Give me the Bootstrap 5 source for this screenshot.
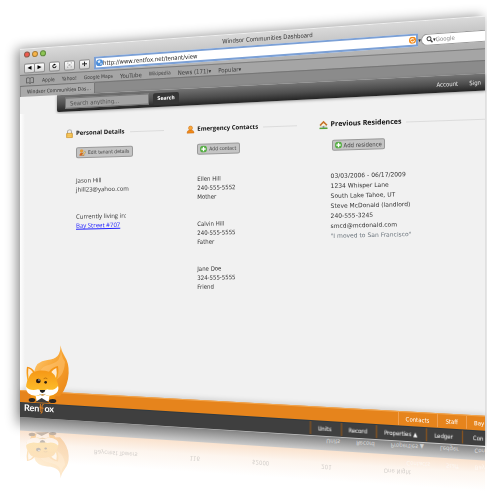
<!DOCTYPE html>
<html lang="en">
<head>
<meta charset="utf-8">
<meta name="viewport" content="width=device-width, initial-scale=1">
<title>Windsor Communities Dashboard</title>
<link href="https://cdn.jsdelivr.net/npm/bootstrap@5.3.0/dist/css/bootstrap.min.css" rel="stylesheet">
<style>
body{background:#fff;font-family:"DejaVu Sans Condensed","DejaVu Sans",sans-serif;font-size:6px;line-height:9px;color:#333;min-height:100vh}
.stage{padding:49px 2px 0 20px;min-height:100vh}
.win{filter:drop-shadow(-3px 0 6px rgba(0,0,0,.45))}
.tilt{transform-origin:0 0}
.chrome{transform:skewY(-4.1deg);background:linear-gradient(#d9d9d9,#b4b4b4 26px,#adadad);border-top:1px solid #efefef;height:38px;margin-bottom:-12px}
.titlebar{height:12px}
.titlebar h1{font-size:6px;line-height:11px;color:#333;padding-left:30px}
.lights{position:absolute;left:4px;top:2px;gap:2px}
.lights span{width:6px;height:6px;border-radius:50%;border:1px solid #8a5a4a;background:#ee5a4e}
.lights span:nth-child(2){background:#f7b448;border-color:#a87d3a}
.lights span:nth-child(3){background:#8ec556;border-color:#5f8a3c}
.tools{height:13px;padding-left:4px}
.tools button{width:11px;flex:none;height:10px;border:1px solid #8f8f8f;border-radius:2px;background:linear-gradient(#fff,#d4d4d4);color:#222}
.tools svg{width:5px;height:5px;display:block}
.tools label svg,.address svg{width:7px;height:7px}
.tools button.next{margin-left:-1px}
.address{height:13px;background:#fff;border:2px solid #7ba0d6;margin-left:4px}
.address input,.google input,.find input{border:0;background:none;font-size:6px;line-height:9px;color:#222;outline:0;min-width:0}
.google{height:12px;width:64px;background:#fff;border:1px solid #9a9a9a;border-right:0;border-radius:6px 0 0 6px}
.google input::placeholder{color:#888}
.marks{transform:skewY(-3.3deg);height:20px;margin-bottom:-9px;background:#a5a5a5;border-top:1px solid #7f7f7f;padding:1px 0 0 6px}
.marks a{color:#3d3d3d;font-size:5px;text-decoration:none;margin-right:7px}
.marks a.wide{font-size:6px}
.tabs{transform:skewY(-3.2deg);height:22px;margin-bottom:-11px;background:#8b8b8b;border-top:1px solid #767676}
.tabs a{width:74px;height:11px;background:#a9a9a9;border-right:1px solid #777;font-size:5px;line-height:10px;padding-left:6px;margin-left:1px;color:#333;text-decoration:none}
.top{transform:skewY(-2.9deg);background:#f1f1f1;height:47px;margin-bottom:-30px}
.head{height:17px;margin-left:37px;background:linear-gradient(#747474,#4e4e4e 55%,#242424);border-radius:0 0 0 2px;box-shadow:0 1px 3px rgba(0,0,0,.35);padding-left:8px}
.find input{width:84px;height:11px;background:#a3a3a3;border:1px solid #777;padding:0 4px}
.find input::placeholder{color:#555;opacity:1}
.find button{width:26px;height:12px;border:0;border-radius:2px;background:#363636;color:#fff;font-weight:bold;font-size:5px}
.head a{color:#e8e8e8;text-decoration:none}
.head a.acct{margin-right:11px}
.page{background:linear-gradient(90deg,#fff,#f1f1f1 5px);min-height:310px;margin-bottom:-34px;padding-top:16px}
.trio{display:grid;grid-template-columns:121fr 132fr 166fr;padding-left:45px}
.heads{transform:skewY(-2deg);height:10px}
.heads h2{font-size:6px;line-height:10px;color:#111;margin:0 5px 0 2px;font-weight:bold;white-space:nowrap;font-family:"Open Sans",sans-serif}
.heads .last h2{font-size:7px;margin-left:3px}
.heads svg{width:9px;height:9px;flex:none}
.heads .rule{height:1px;background:#dcdcdc;flex:1;margin-right:22px}
.heads .last .rule{margin-right:0}
.acts{transform:skewY(-1.7deg);margin-top:9px}
.acts button{margin-left:11px;gap:2px;height:11px;border:1px solid #999;border-radius:2px;background:#c4c4c4;color:#444;font-size:5px;line-height:9px;padding:0 3px 0 2px}
.acts .home button{font-size:6px;margin-left:13px;padding-right:2px}
.acts svg{width:7px;height:7px}
.facts{transform:skewY(-1.3deg);margin-top:18px}
.facts div div{padding-left:11px}
.facts p{margin:0 0 18px;line-height:9px}
.facts .tenant p{font-family:"Open Sans",sans-serif}
.facts .home p{font-family:"DejaVu Sans",sans-serif;line-height:10px}
.facts a{color:#22f}
.facts .home{margin-left:1px}
.foot1{transform:skewY(3.17deg);background:#e6841c;border-top:1px solid #f3a64e;height:26px;margin-bottom:-14px;box-shadow:0 -2px 5px rgba(0,0,0,.12)}
.foot2{transform:skewY(3.55deg);background:#3f3f3f;height:15px;border-top:1px solid #30393f}
.foot1 a,.foot2 a{color:#fff;text-decoration:none;border-left:1px solid #f0a050;padding:0 8px 0 7px;line-height:13px;height:13px;white-space:nowrap}
.foot2 a{border-color:#9b5a18;padding-right:9px}
.foot1 a:last-child,.foot2 a:last-child{width:19px;overflow:hidden;padding-right:0}
.foot2 a:last-child{width:23px;padding-left:10px}
.mirror{transform:skewY(3.7deg);height:60px;background:linear-gradient(#838383,#c9c9c9 13px,#fae3cf 14px,#fdf5ee 26px,#fff 44px)}
.mirror span{display:inline-block;transform:scaleY(-1);color:#fff;opacity:.6}
.mirror .ghost span{color:#888;opacity:.35}
.brand{position:absolute;left:20px;top:343px;width:52px}
.brand .word{font:bold 9px/12px Lato,sans-serif;color:#fff;margin:-13px 0 0 4px;transform:skewY(3deg)}
.brand .word svg{width:5px;height:12px}
.echo-box{position:absolute;left:20px;top:414px;width:52px}
.echo{display:block;width:52px;opacity:.27;transform:scaleY(-.8)}
</style>
<script src="https://cdn.jsdelivr.net/npm/bootstrap@5.3.0/dist/js/bootstrap.bundle.min.js"></script>
</head>
<body class="overflow-hidden">
<div class="stage position-relative overflow-hidden">
 <div class="win">
  <header class="chrome tilt">
   <div class="titlebar position-relative">
    <div class="lights d-flex"><span></span><span></span><span></span></div>
    <h1 class="text-center m-0 fw-normal">Windsor Communities Dashboard</h1>
   </div>
   <div class="tools d-flex align-items-center">
    <button class="p-0 d-flex align-items-center justify-content-center" aria-label="Back"><svg viewBox="0 0 10 10"><path d="M9 1v8L1 5z"/></svg></button>
    <button class="next p-0 d-flex align-items-center justify-content-center" aria-label="Forward"><svg viewBox="0 0 10 10"><path d="M1 1v8l8-4z"/></svg></button>
    <button class="p-0 ms-1 d-flex align-items-center justify-content-center" aria-label="Reload"><svg viewBox="0 0 10 10"><path d="M8 5a3.200 3.200 0 1 1-3-3" fill="none" stroke="#222" stroke-width="2"/><path d="M4 0v4l4-2z"/></svg></button>
    <button class="p-0 ms-1 d-flex align-items-center justify-content-center" aria-label="Snapshot"><svg viewBox="0 0 10 10"><path d="M0 3V0h3M7 0h3v3M10 7v3H7M3 10H0V7M3 3l4 4M7 3L3 7" fill="none" stroke="#777"/></svg></button>
    <button class="p-0 ms-1 d-flex align-items-center justify-content-center" aria-label="Add bookmark"><svg viewBox="0 0 10 10"><path d="M5 0v10M0 5h10" stroke="#222" stroke-width="2"/></svg></button>
    <div class="address d-flex align-items-center flex-fill">
     <svg viewBox="0 0 14 14" class="flex-shrink-0"><circle cx="7" cy="7" r="7" fill="#4b8edb"/><path d="M3 3l5-1 1 4-4 2zM8 9l4-2-2 5z" fill="#e4f1fb"/></svg>
     <input class="flex-fill p-0" aria-label="Address" value="http://www.rentfox.net/tenant/view">
     <svg viewBox="0 0 14 14" class="flex-shrink-0"><circle cx="7" cy="7" r="7" fill="#f18a1b"/><path d="M3 7a4 4 0 0 1 7-2M11 7a4 4 0 0 1-7 2" fill="none" stroke="#fff" stroke-width="2"/></svg>
    </div>
    <span>▾</span>
    <label class="google d-flex align-items-center ps-1"><svg viewBox="0 0 14 14" class="flex-shrink-0"><circle cx="6" cy="6" r="4" fill="none" stroke="#444" stroke-width="2"/><path d="M9 9l4 5" stroke="#444" stroke-width="3"/></svg>▾<input class="w-100 p-0" placeholder="Google" aria-label="Google"></label>
   </div>
  </header>
  <nav class="marks tilt d-flex align-items-start" aria-label="Bookmarks">
   <svg class="me-2" width="8" height="8" viewBox="0 0 16 16"><path d="M8 4Q5 1 1 3v10q4-2 7 1 3-3 7-1V3q-4-2-7 1v10" fill="none" stroke="#555" stroke-width="1.500"/></svg>
   <a href="#">Apple</a><a href="#">Yahoo!</a><a href="#">Google Maps</a><a href="#" class="wide">YouTube</a><a href="#">Wikipedia</a><a href="#" class="wide">News (171)▾</a><a href="#" class="wide">Popular▾</a>
  </nav>
  <div class="tabs tilt"><a href="#" class="d-block text-nowrap overflow-hidden">Windsor Communities Das…</a></div>
  <div class="top tilt">
   <div class="head d-flex align-items-center overflow-hidden">
    <form class="find d-flex align-items-center gap-1"><input placeholder="Search anything..." aria-label="Search anything"><button type="button" class="p-0">Search</button></form>
    <a href="#" class="ms-auto acct">Account</a><a href="#" class="me-1">Sign</a>
   </div>
  </div>
  <main class="page position-relative">
   <div class="trio heads tilt">
    <div class="d-flex align-items-center"><svg viewBox="0 0 18 18"><path d="M5 9V5a4 4 0 0 1 8 0v4" fill="none" stroke="#aaa" stroke-width="2"/><rect x="3" y="8" width="12" height="9" rx="1" fill="#f0b63c" stroke="#bd8526"/><path d="M5 11h8M5 14h8" stroke="#ffe5a0"/></svg><h2>Personal Details</h2><span class="rule"></span></div>
    <div class="d-flex align-items-center"><svg viewBox="0 0 18 18"><path d="M2 16q0-5 5-6h4q5 1 5 6z" fill="#f28a18" stroke="#c86a10"/><circle cx="9" cy="6" r="4" fill="#fba83a" stroke="#c86a10"/></svg><h2>Emergency Contacts</h2><span class="rule"></span></div>
    <div class="d-flex align-items-center last"><svg viewBox="0 0 18 18"><path d="M4 9v7h10V9L9 4z" fill="#fff4dc" stroke="#999"/><path d="M2 10l7-7 7 7" fill="none" stroke="#c7742a" stroke-width="3"/><path d="M7 16v-5h4v5" fill="#7c94b5"/><path d="M1 16h16" stroke="#54a238" stroke-width="3"/></svg><h2>Previous Residences</h2><span class="rule"></span></div>
   </div>
   <div class="trio acts tilt">
    <div><button class="d-flex align-items-center"><svg viewBox="0 0 16 16"><circle cx="6" cy="4" r="4" fill="#e49b35"/><path d="M1 15q0-7 6-7 5 0 5 7z" fill="#d8641c"/><path d="M6 14l7-9 3 2-7 8z" fill="#f5d378" stroke="#777"/></svg>Edit tenant details</button></div>
    <div><button class="d-flex align-items-center"><svg viewBox="0 0 16 16"><circle cx="8" cy="8" r="8" fill="#57ae45"/><path d="M8 3v10M3 8h10" stroke="#fff" stroke-width="3"/></svg>Add contact</button></div>
    <div class="home"><button class="d-flex align-items-center"><svg viewBox="0 0 16 16"><circle cx="8" cy="8" r="8" fill="#57ae45"/><path d="M8 3v10M3 8h10" stroke="#fff" stroke-width="3"/></svg>Add residence</button></div>
   </div>
   <div class="trio facts tilt">
    <div class="tenant"><div><p>Jason Hill<br>jhill23@yahoo.com</p><p>Currently living in:<br><a href="#">Bay Street #707</a></p></div></div>
    <div><div><p>Ellen Hill<br>240-555-5552<br>Mother</p><p>Calvin Hill<br>240-555-5555<br>Father</p><p>Jane Doe<br>324-555-5555<br>Friend</p></div></div>
    <div class="home"><div><p>03/03/2006 - 06/17/2009<br>1234 Whisper Lane<br>South Lake Tahoe, UT<br>Steve McDonald (landlord)<br>240-555-3245<br>smcd@mcdonald.com<br><span class="text-secondary">"I moved to San Francisco"</span></p></div></div>
   </div>
  </main>
  <nav class="foot1 tilt d-flex justify-content-end" aria-label="Sections"><a href="#">Contacts</a><a href="#">Staff</a><a href="#">Bay</a></nav>
  <nav class="foot2 tilt d-flex justify-content-end" aria-label="Property"><a href="#">Units</a><a href="#">Record</a><a href="#">Properties ▲</a><a href="#">Ledger</a><a href="#">Con</a></nav>
 </div>
 <div class="mirror tilt" aria-hidden="true">
  <div class="d-flex justify-content-end gap-3"><span>Units</span><span>Record</span><span>Properties ▲</span><span>Ledger</span><span>Con</span></div>
  <div class="d-flex justify-content-end gap-3 pt-2"><span>Contacts</span><span>Staff</span><span>Bay</span></div>
  <div class="ghost d-flex justify-content-around px-5"><span>Baycrest Towers</span><span>116</span><span>$2000</span><span>201</span><span>One Night</span></div>
 </div>
 <div class="echo-box" aria-hidden="true"><svg class="echo" viewBox="60 40 156 220"><use href="#fox"/></svg></div>
 <div class="brand">
  <svg class="d-block" viewBox="60 40 156 220" role="img" aria-label="Fox">
   <defs>
    <linearGradient id="tail" x1="0" y1="0" x2="1" y2="1"><stop offset="0" stop-color="#ffd080"/><stop offset=".5" stop-color="#f7a432"/><stop offset="1" stop-color="#e98314"/></linearGradient>
    <linearGradient id="face" x1="0" y1="0" x2="0" y2="1"><stop offset="0" stop-color="#f48f12"/><stop offset="1" stop-color="#ffc72e"/></linearGradient>
   </defs>
   <g id="fox">
    <path d="M181 47q3 18 14 35 12 18 11 48-1 38-26 70l-40-2-38-70q5-34 40-37 42-2 39-44z" fill="url(#tail)"/>
    <path d="M183 62q0 35-30 42-30 6-32 22l30 30q42-8 44-60-10-12-12-34z" fill="#ffc77a" opacity=".5"/>
    <path d="M96 165q-10 30 0 48h64q14-24 2-50z" fill="#ef9415"/>
    <path d="M102 176q26 44 50 0l-6 38h-36z" fill="#fff"/>
    <path d="M82 152q-4-25-1-41 14 2 23 15 20-7 43 0 10-14 27-17 4 22-4 44 8 14 4 30-10 14-30 16l-16-6-14 6q-24-2-35-18-2-16 3-29z" fill="url(#face)"/>
    <path d="M85 116q9 3 14 12-11 6-13 20-3-18-1-32zM169 115q-10 4-15 12 11 8 14 18 4-16 1-30z" fill="#fff" opacity=".8"/>
    <path d="M78 171q12 14 36 8l14 5 14-5q20 6 32-10 4 12-5 21-16 13-31 6l-10-3-10 3q-20 6-34-6-7-8-6-19z" fill="#fff"/>
    <circle cx="115" cy="154" r="7" fill="#281b12"/><circle cx="117" cy="151" r="2" fill="#fff"/><circle cx="137" cy="158" r="4" fill="#281b12"/>
    <path d="M131 147q6-4 11 0" fill="none" stroke="#9d5708" stroke-width="2"/>
    <path d="M119 181h17q-1 8-9 9-7-1-8-9z" fill="#202020"/><path d="M118 194q9 5 18 0" fill="none" stroke="#999" stroke-width="2"/>
    <ellipse cx="96" cy="211" rx="10" ry="6" fill="#292523"/><ellipse cx="158" cy="214" rx="11" ry="6" fill="#292523"/>
    <path d="M105 218l20-13 24 15z" fill="#3c3c3c"/>
   </g>
  </svg>
  <div class="word d-flex align-items-center">Ren<svg viewBox="0 0 18 38"><path d="M5 2v24q0 6 5 6M1 14h8M17 3q-6 0-6 6v22q0 5-5 5M8 17h9" fill="none" stroke="#f18a22" stroke-width="3"/></svg>ox</div>
 </div>
</div>
</body>
</html>
